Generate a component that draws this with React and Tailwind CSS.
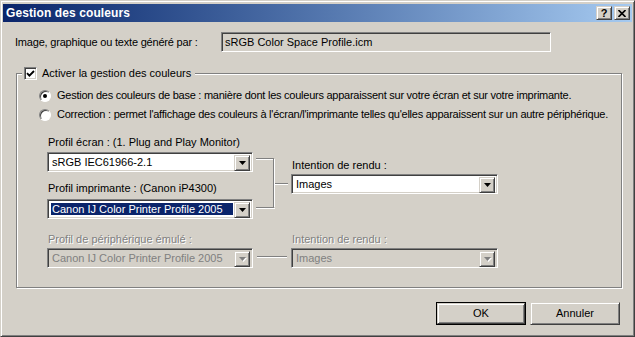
const FACE = "bg-[#d4d0c8]";
const SUNKEN =
  "border border-t-[#808080] border-l-[#808080] border-r-white border-b-white shadow-[inset_1px_1px_0_#404040,inset_-1px_-1px_0_#d4d0c8]";
const RAISED =
  "border border-t-[#d4d0c8] border-l-[#d4d0c8] border-r-[#404040] border-b-[#404040] shadow-[inset_1px_1px_0_#ffffff,inset_-1px_-1px_0_#808080]";
const EMBOSS = "text-[#808080] [text-shadow:1px_1px_0_#ffffff]";

function ArrowButton({ disabled }) {
  return (
    <div className={`w-[16px] h-[16px] shrink-0 flex items-center justify-center ${FACE} ${RAISED}`}>
      <svg width="7" height="4" viewBox="0 0 7 4" className={disabled ? "[filter:drop-shadow(1px_1px_0_#fff)]" : ""}>
        <path d="M0 0h7L3.5 4z" fill={disabled ? "#808080" : "#000"} />
      </svg>
    </div>
  );
}

function Combo({ value, width, selected, disabled }) {
  return (
    <div
      className={`flex h-[20px] p-[2px] ${width} ${SUNKEN} ${disabled ? FACE : "bg-white"}`}
    >
      <div className="flex-1 flex items-stretch p-[1px] min-w-0">
        <span
          className={`flex-1 flex items-center pl-[1px] leading-none whitespace-nowrap ${
            selected ? "bg-[#0a246a] text-white" : disabled ? "text-[#808080]" : "text-black"
          }`}
        >
          {value}
        </span>
      </div>
      <ArrowButton disabled={disabled} />
    </div>
  );
}

function Radio({ checked }) {
  return (
    <div className="w-[12px] h-[12px] rounded-full border border-t-[#808080] border-l-[#808080] border-r-white border-b-white bg-white shadow-[inset_1px_1px_0_#404040] flex items-center justify-center shrink-0">
      {checked && <div className="w-[4px] h-[4px] rounded-full bg-black" />}
    </div>
  );
}

function Checkbox() {
  return (
    <div className={`w-[13px] h-[13px] bg-white flex items-center justify-center shrink-0 ${SUNKEN}`}>
      <svg width="9" height="9" viewBox="0 0 9 9">
        <path d="M1 4.2l2.4 2.4L8 2" stroke="#000" strokeWidth="1.9" fill="none" />
      </svg>
    </div>
  );
}

function Bracket() {
  return (
    <svg width="38" height="84" className="shrink-0">
      <g stroke="#808080" strokeWidth="1" shapeRendering="crispEdges">
        <path d="M3 23.5H20.5V72.5H3M20.5 48.5H35" fill="none" />
      </g>
      <g stroke="#ffffff" strokeWidth="1" shapeRendering="crispEdges">
        <path d="M3 24.5H19.5M21.5 24V72M3 73.5H21.5M21.5 49.5H35" fill="none" />
      </g>
    </svg>
  );
}

export default function App() {
  return (
    <div
      className={`w-[635px] h-[337px] ${FACE} flex flex-col px-[2px] pt-[3px] pb-[2px] border border-t-[#d4d0c8] border-l-[#d4d0c8] border-r-[#404040] border-b-[#404040] shadow-[inset_1px_1px_0_#ffffff,inset_-1px_-1px_0_#808080] font-['Liberation_Sans',Arial,sans-serif] text-[11px] text-black overflow-hidden`}
    >
      <div className="h-[18px] flex items-center bg-linear-to-r from-[#0a246a] to-[#a6caf0] pl-[3px] pr-[2px]">
        <span className="flex-1 text-white font-bold text-[12px] tracking-[0.1px]">Gestion des couleurs</span>
        <div className="flex gap-[2px]">
          <div className={`w-[16px] h-[14px] flex items-center justify-center ${FACE} ${RAISED} font-bold text-[11px] leading-none`}>
            ?
          </div>
          <div className={`w-[16px] h-[14px] flex items-center justify-center ${FACE} ${RAISED}`}>
            <svg width="8" height="7" viewBox="0 0 8 7">
              <path d="M0.5 0L7.5 7M7.5 0L0.5 7" stroke="#000" strokeWidth="1.6" />
            </svg>
          </div>
        </div>
      </div>

      <div className="flex flex-col pt-[10px]">
        <div className="flex items-center h-[20px] pl-[12px]">
          <span className="w-[206px] tracking-[-0.2px]">Image, graphique ou texte généré par :</span>
          <div className={`w-[330px] h-[20px] flex items-center pl-[3px] ${SUNKEN}`}>sRGB Color Space Profile.icm</div>
        </div>

        <div className="relative mt-[21px] ml-[13px] w-[606px] h-[215px] border border-[#808080] shadow-[1px_1px_0_#ffffff,inset_1px_1px_0_#ffffff]">
          <div className={`absolute left-[5px] top-[-8px] h-[14px] px-[2px] flex items-center gap-[5px] ${FACE}`}>
            <Checkbox />
            <span className="pr-[2px]">Activer la gestion des couleurs</span>
          </div>

          <div className="flex flex-col pt-[12px] tracking-[-0.25px]">
            <div className="flex items-center gap-[6px] h-[19px] pl-[22px]">
              <Radio checked />
              <span>Gestion des couleurs de base : manière dont les couleurs apparaissent sur votre écran et sur votre imprimante.</span>
            </div>
            <div className="flex items-center gap-[6px] h-[19px] pl-[22px]">
              <Radio />
              <span>Correction : permet l'affichage des couleurs à l'écran/l'imprimante telles qu'elles apparaissent sur un autre périphérique.</span>
            </div>
          </div>

          <div className="flex mt-[11px] pl-[30px]">
            <div className="flex flex-col w-[206px]">
              <span className="h-[14px] leading-[14px] pl-[1px]">Profil écran : (1. Plug and Play Monitor)</span>
              <div className="mt-[3px]">
                <Combo value="sRGB IEC61966-2.1" width="w-[206px]" />
              </div>
              <span className="h-[14px] leading-[14px] pl-[1px] mt-[9px]">Profil imprimante : (Canon iP4300)</span>
              <div className="mt-[4px]">
                <Combo value="Canon IJ Color Printer Profile 2005" width="w-[206px]" selected />
              </div>
            </div>
            <Bracket />
            <div className="flex flex-col pt-[23px]">
              <span className="h-[14px] leading-[14px] pl-[1px]">Intention de rendu :</span>
              <div className="mt-[2px]">
                <Combo value="Images" width="w-[207px]" />
              </div>
            </div>
          </div>

          <div className="flex mt-[13px] pl-[30px]">
            <div className="flex flex-col w-[206px]">
              <span className={`h-[14px] leading-[14px] pl-[1px] ${EMBOSS}`}>Profil de périphérique émulé :</span>
              <div className="mt-[2px]">
                <Combo value="Canon IJ Color Printer Profile 2005" width="w-[206px]" disabled />
              </div>
            </div>
            <div className="w-[38px] flex items-end pb-[10px] pl-[4px] pr-[4px]">
              <div className="w-full h-[2px] border-t border-t-[#808080] border-b border-b-white" />
            </div>
            <div className="flex flex-col">
              <span className={`h-[14px] leading-[14px] pl-[1px] ${EMBOSS}`}>Intention de rendu :</span>
              <div className="mt-[2px]">
                <Combo value="Images" width="w-[207px]" disabled />
              </div>
            </div>
          </div>
        </div>

        <div className="flex justify-end gap-[4px] pr-[12px] mt-[14px]">
          <div className="w-[90px] h-[23px] border border-black">
            <div className={`w-full h-full flex items-center justify-center ${FACE} ${RAISED}`}>OK</div>
          </div>
          <div className={`w-[90px] h-[23px] flex items-center justify-center ${FACE} ${RAISED}`}>Annuler</div>
        </div>
      </div>
    </div>
  );
}
